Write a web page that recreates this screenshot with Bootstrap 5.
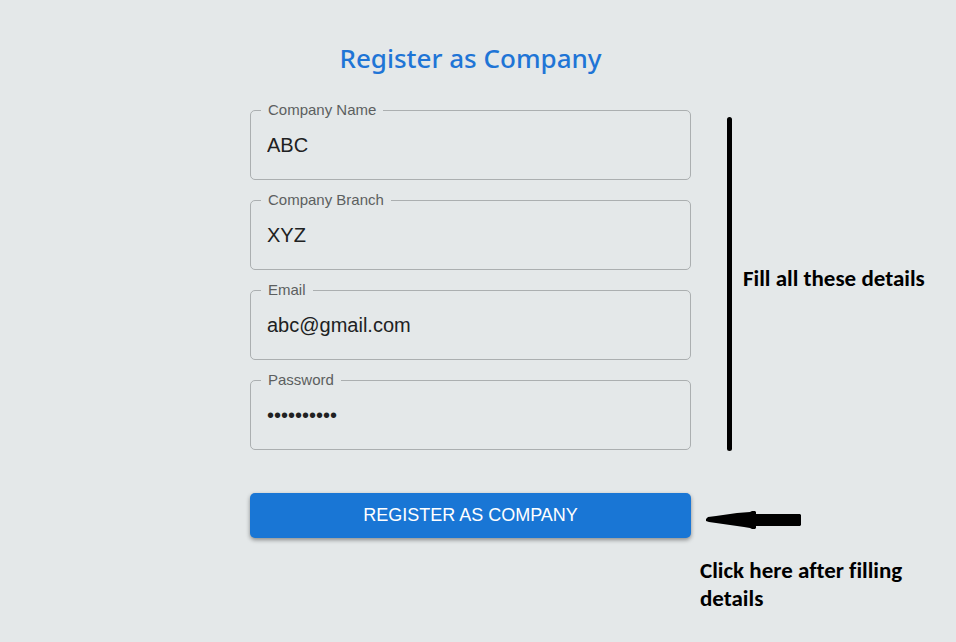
<!DOCTYPE html>
<html lang="en">
<head>
<meta charset="utf-8">
<meta name="viewport" content="width=device-width, initial-scale=1">
<title>Register as Company</title>
<link href="https://cdn.jsdelivr.net/npm/bootstrap@5.3.0/dist/css/bootstrap.min.css" rel="stylesheet">
<style>
  body { background: #e4e8e9; font-family: "Liberation Sans", Arial, sans-serif; }
  .register-page { display: grid; grid-template-columns: 250fr 441fr 265fr; padding-top: 40px; }
  .register-page > .mid { grid-column: 2; }
  .register-page > .side { grid-column: 3; }
  .page-title { color: #1f75d6; font-family: "Segoe UI", "Noto Sans", sans-serif; font-size: 26px; font-weight: 500; line-height: 36px; margin-bottom: 34px; }
  .fields { gap: 20px; }
  .field { height: 70px; border: 1px solid #abafb0; border-radius: 5px; }
  .field label { top: -12px; left: 10px; padding: 0 7px; background: #e4e8e9; color: #5c5f60; font-size: 15px; line-height: 22px; }
  .field .form-control { height: 68px; padding: 0 16px; color: #202122; font-size: 20px; }
  .submit-btn { margin-top: 43px; height: 45px; background: #1976d5; color: #fff; font-size: 18px; border: 0; border-radius: 5px; box-shadow: 0 2px 4px rgba(0, 0, 0, .4); }
  .submit-btn:hover { background: #1565c0; color: #fff; }
  .note { color: #000; font-family: Calibri, Lato, sans-serif; font-size: 23px; font-weight: 700; line-height: 28px; font-variant-ligatures: none; }
  .bracket { padding: 7px 0 0 36px; gap: 11px; }
  .bar { width: 5px; height: 334px; border-radius: 3px; background: #000; }
  .bracket .note { padding-bottom: 12px; }
  .arrow { margin: 60px 0 0 15px; }
  .click-note { margin: 27px 24px 0 9px; }
</style>
<script src="https://cdn.jsdelivr.net/npm/bootstrap@5.3.0/dist/js/bootstrap.bundle.min.js"></script>
</head>
<body>
<main class="register-page">
  <h1 class="page-title mid text-center">Register as Company</h1>
  <form class="mid">
    <div class="fields d-flex flex-column">
      <div class="field position-relative">
        <label class="position-absolute" for="company">Company Name</label>
        <input class="form-control bg-transparent border-0 shadow-none" id="company" type="text" value="ABC">
      </div>
      <div class="field position-relative">
        <label class="position-absolute" for="branch">Company Branch</label>
        <input class="form-control bg-transparent border-0 shadow-none" id="branch" type="text" value="XYZ">
      </div>
      <div class="field position-relative">
        <label class="position-absolute" for="email">Email</label>
        <input class="form-control bg-transparent border-0 shadow-none" id="email" type="email" value="abc@gmail.com">
      </div>
      <div class="field position-relative">
        <label class="position-absolute" for="password">Password</label>
        <input class="form-control bg-transparent border-0 shadow-none" id="password" type="password" value="abcdefghij">
      </div>
    </div>
    <button class="btn submit-btn w-100" type="button">REGISTER AS COMPANY</button>
  </form>
  <aside class="side">
    <div class="bracket d-flex align-items-center">
      <div class="bar flex-shrink-0"></div>
      <div class="note">Fill all these details</div>
    </div>
    <svg class="arrow d-block" width="96" height="18" viewBox="0 0 96 18" aria-hidden="true">
      <path d="M0 8 L2 6 L10 5 L17 4 L24 3 L31 2 L44 1 L46 0 H49 L50 1 V3 H94 L95 4 V14 L94 15 H50 V17 L49 18 H46 L44 17 L38 16 L31 15 L24 14 L17 13 L10 12 L3 11 L0 10 Z"/>
    </svg>
    <div class="note click-note">Click here after filling details</div>
  </aside>
</main>
</body>
</html>
